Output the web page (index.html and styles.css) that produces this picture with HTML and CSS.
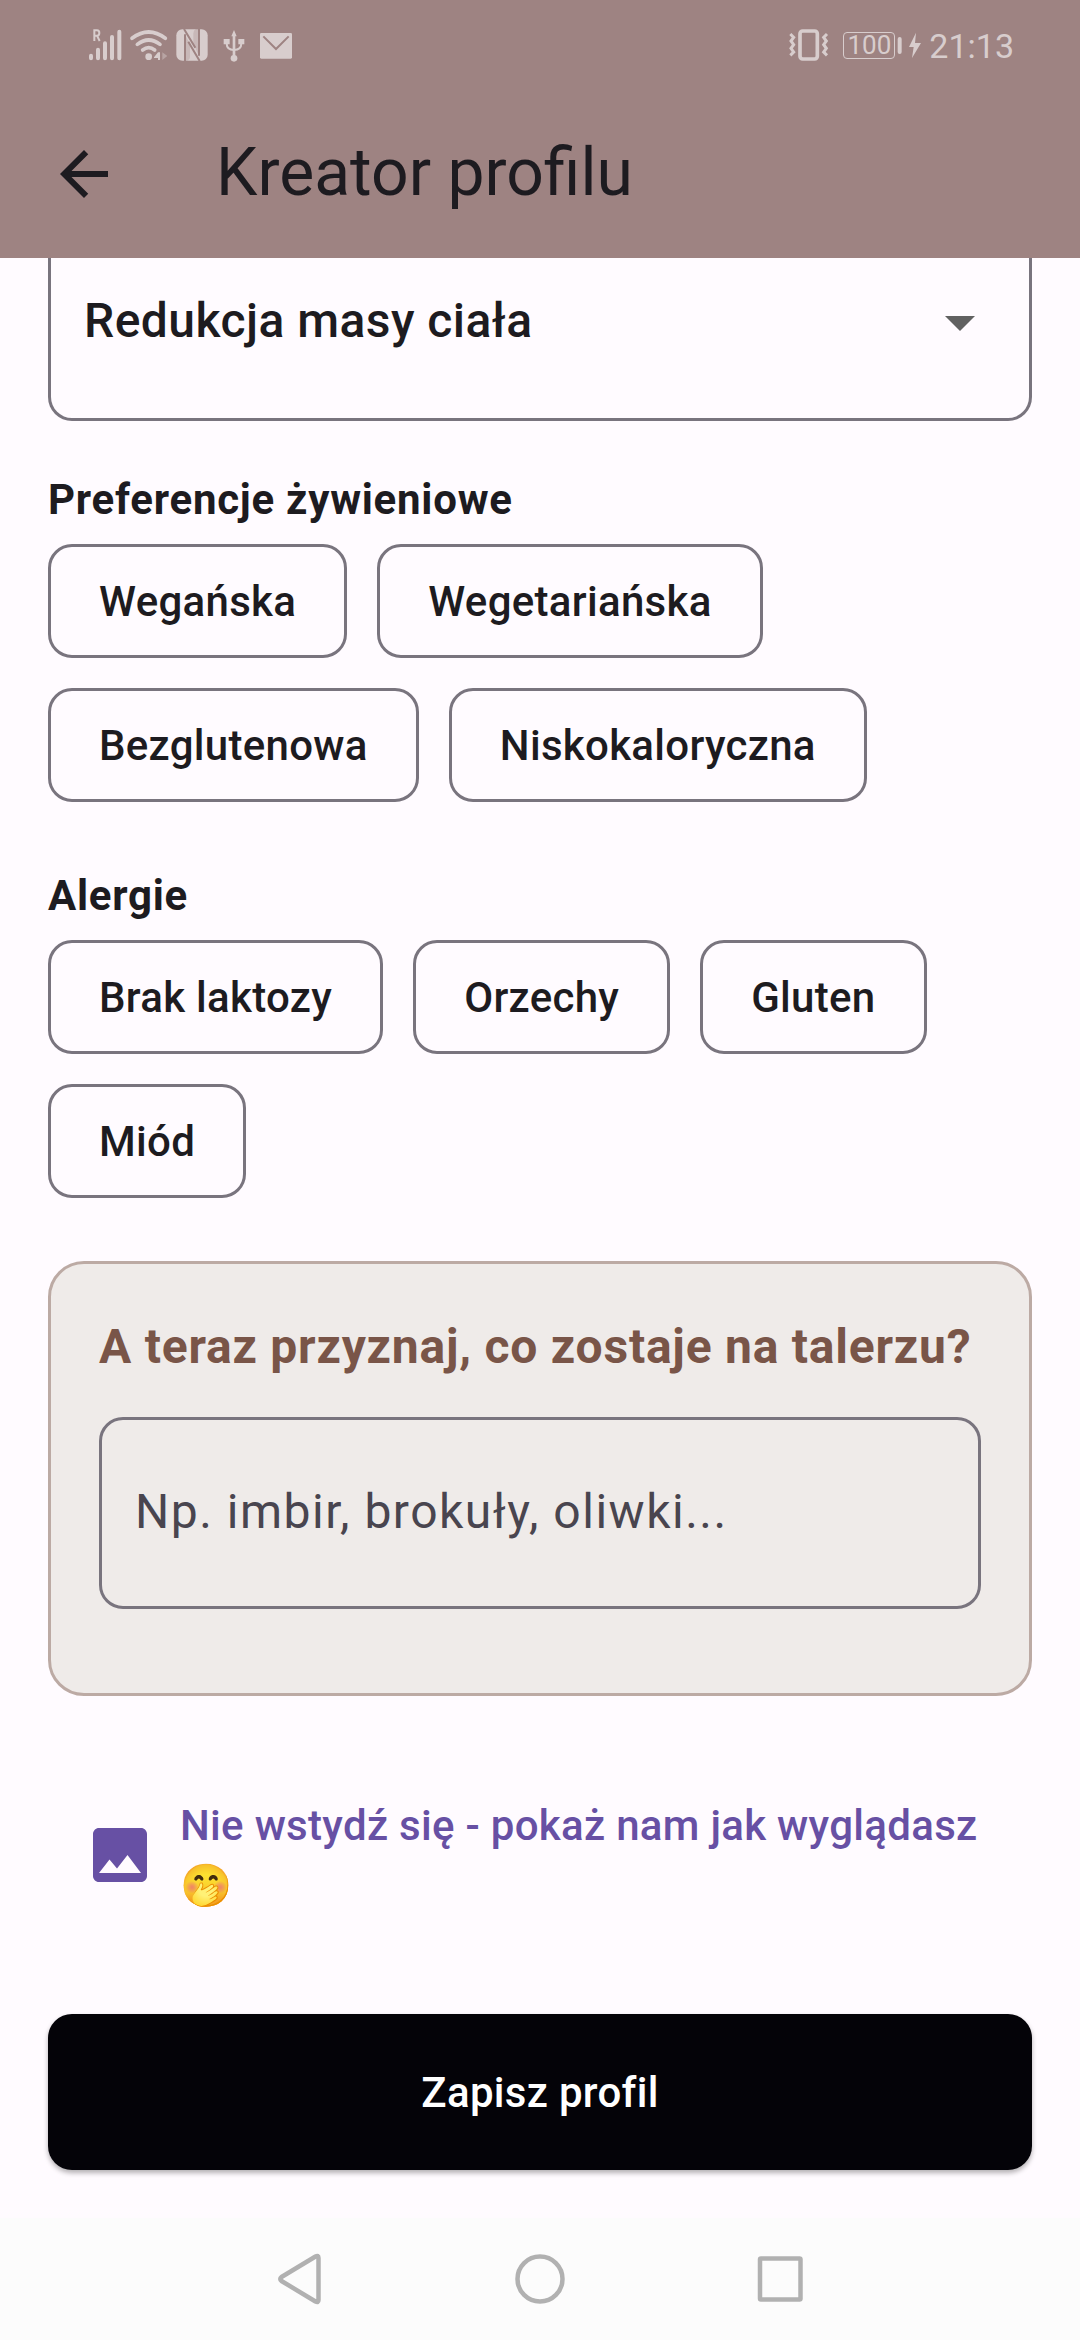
FILE: index.html
```html
<!DOCTYPE html>
<html lang="pl">
<head>
<meta charset="utf-8">
<title>Kreator profilu</title>
<link rel="stylesheet" href="styles.css">
</head>
<body>
<div class="screen">
  <header class="top">
    <div class="status">
      <svg class="status-left" width="240" height="60" viewBox="0 0 720 180" fill="#d8cdcd">
        <g stroke="#d8cdcd" stroke-width="12" stroke-linecap="round"><path d="M63 122v8M84 104v26M105 85v45M126 66v64M148 50v80"/></g>
        <path fill="none" stroke="#d8cdcd" stroke-width="6" d="M73 78V46h8q7 0 7 8t-7 8h-8M81 62l8 16"/>
        <g fill="none" stroke="#d8cdcd" stroke-width="11" stroke-linecap="round"><path d="M186 70q50-38 100 0M202 88q34-26 68 0M218 105q18-14 36 0"/></g>
        <circle cx="236" cy="125" r="10"/>
        <path d="M252 127l12-15h6v23h-6v-6h-12z"/>
        <path opacity=".45" d="M277 112l15 11-15 12z"/>
        <rect x="319" y="43" width="94" height="94" rx="18"/>
        <g fill="none" stroke="#9e8382" stroke-width="6" stroke-linejoin="round"><path d="M345 138V58M355 80l34 58M342 42l34 56M387 42v80"/></g>
        <path fill="#9e8382" d="M355 78l5 8v40q0 8-8 11h-7V60zM376 98l-6-8V56q0-10 8-14h10v84z" opacity=".28"/>
        <path d="M484 64l8-19 8 19zM488 60h8v65h-8zM461 72h18v16h-18zM505 72h18v16h-18z"/>
        <circle cx="492" cy="130" r="10"/>
        <path fill="none" stroke="#d8cdcd" stroke-width="6" d="M470 85q0 20 22 20t22-20"/>
        <rect x="570" y="54" width="96" height="77" rx="4"/>
        <path fill="none" stroke="#9e8382" stroke-width="6" d="M580 64l38 38 38-38"/>
      </svg>
      <div class="status-right">
        <svg width="40" height="32" viewBox="0 0 120 96" fill="none" stroke="#d8cdcd"><rect x="33" y="6" width="52" height="84" rx="8" stroke-width="11"/><path stroke-width="9" d="M4 15l10 10-8 11 8 11-8 11 8 11-10 10M114 15l-10 10 8 11-8 11 8 11-8 11 10 10"/></svg>
        <span class="battery">100</span>
        <svg class="bolt" width="24" height="26" viewBox="0 0 72 78" fill="#d8cdcd"><rect x="2" y="15" width="12" height="51" rx="6"/><path d="M57 2L36 45h14l-5 33 27-45H54z"/></svg>
        <span class="clock">21:13</span>
      </div>
    </div>
    <div class="bar">
      <svg width="72" height="72" viewBox="0 0 24 24" fill="#1d1b20"><path d="M20 11H7.830l5.590-5.590L12 4l-8 8 8 8 1.410-1.410L7.830 13H20v-2z"/></svg>
      <h1 class="title">Kreator profilu</h1>
    </div>
  </header>
  <main class="content">
    <div class="select">
      <span>Redukcja masy ciała</span>
      <svg class="caret" width="72" height="72" viewBox="0 0 24 24" fill="#616161"><path d="M7 10l5 5 5-5z"/></svg>
    </div>
    <h2 class="label label-diet">Preferencje żywieniowe</h2>
    <div class="chips">
      <span class="chip">Wegańska</span><span class="chip">Wegetariańska</span><span class="chip">Bezglutenowa</span><span class="chip">Niskokaloryczna</span>
    </div>
    <h2 class="label label-allergy">Alergie</h2>
    <div class="chips">
      <span class="chip">Brak laktozy</span><span class="chip">Orzechy</span><span class="chip">Gluten</span><span class="chip">Miód</span>
    </div>
    <section class="card">
      <h2 class="question">A teraz przyznaj, co zostaje na talerzu?</h2>
      <div class="input">Np. imbir, brokuły, oliwki...</div>
    </section>
    <div class="photo">
      <svg width="72" height="72" viewBox="0 0 24 24" fill="#6750a4"><path d="M21 19V5c0-1.100-.9-2-2-2H5c-1.100 0-2 .9-2 2v14c0 1.100.9 2 2 2h14c1.100 0 2-.9 2-2zM8.500 13.500l2.500 3.010L14.500 12l4.500 6H5l3.500-4.500z"/></svg>
      <span class="photo-text">Nie wstydź się - pokaż nam jak wyglądasz <span class="emoji">🤭</span></span>
    </div>
    <div class="save">Zapisz profil</div>
  </main>
  <nav class="nav">
    <svg width="560" height="122" viewBox="0 0 560 122" fill="none" stroke="#b1b1b1" stroke-width="4.500" stroke-linejoin="round"><path d="M58.500 40v42q0 3-3 1.500L21.500 63q-2.500-2 0-4L55.500 38.500q3-1.500 3 1.500z"/><circle cx="280" cy="61" r="22.500"/><rect x="500" y="40.500" width="40.500" height="41" rx="1"/></svg>
  </nav>
</div>
</body>
</html>
```
FILE: styles.css
```css
* { box-sizing: border-box; }
body { margin: 0; font-family: Roboto, "Liberation Sans", sans-serif; background: #fffbff; color: #1d1b20; }
.screen { width: 1080px; height: 2340px; display: flex; flex-direction: column; overflow: hidden; }
.top { height: 258px; flex: none; background: #9e8382; }
.status { height: 90px; display: flex; justify-content: space-between; padding: 15px 66px 0 70px; color: #d8cdcd; }
.status-right { display: flex; align-items: center; height: 60px; }
.battery { width: 52px; height: 27px; margin-left: 14px; border: 1.500px solid #d8cdcd; border-radius: 4px; font-size: 26px; line-height: 25px; text-align: center; }
.bolt { margin-left: 2px; }
.clock { font-size: 34px; line-height: 60px; margin-left: 8px; padding-top: 2px; }
.bar { height: 168px; display: flex; align-items: center; padding: 0 48px; gap: 96px; }
.title { margin: 0; font-size: 66px; font-weight: 400; line-height: 84px; padding-bottom: 2px; }
.content { height: 1960px; flex: none; padding: 0 48px; display: flex; flex-direction: column; }
.select { height: 163px; flex: none; border: 3px solid #79747e; border-top: 0; border-radius: 0 0 24px 24px; display: flex; justify-content: space-between; align-items: flex-start; padding: 27px 33px 0; font-size: 48px; font-weight: 500; line-height: 72px; letter-spacing: .45px; }
.caret { margin-top: 1px; }
.label { margin: 0; font-size: 42px; font-weight: 700; line-height: 60px; letter-spacing: .75px; }
.label-diet { margin-top: 49px; }
.label-allergy { margin-top: 64px; }
.chips { display: flex; flex-wrap: wrap; gap: 30px; margin-top: 14px; }
.chip { height: 114px; border: 3px solid #79747e; border-radius: 24px; padding: 0 48px; font-size: 42px; font-weight: 500; line-height: 110px; letter-spacing: .3px; }
.card { height: 435px; flex: none; margin-top: 63px; border: 3px solid #bcaaa4; border-radius: 36px; background: #efebe9; padding: 47px 48px 48px; }
.question { margin: 0; color: #795548; font-size: 48px; font-weight: 700; line-height: 72px; letter-spacing: .77px; white-space: nowrap; }
.input { height: 192px; margin-top: 34px; border: 3px solid #79747e; border-radius: 24px; padding: 0 33px; font-size: 48px; line-height: 184px; letter-spacing: 1.500px; color: #49454f; }
.photo { margin-top: 99px; height: 120px; flex: none; display: flex; align-items: center; padding: 0 36px; gap: 24px; color: #6750a4; font-size: 42px; font-weight: 500; line-height: 60px; letter-spacing: .3px; }
.photo-text { flex: 1; padding-top: 2px; }
.emoji { font-family: "Noto Color Emoji", sans-serif; }
.save { height: 156px; flex: none; margin-top: 99px; border-radius: 24px; background: #040308; color: #fff; font-size: 42px; font-weight: 500; line-height: 158px; text-align: center; letter-spacing: .3px; box-shadow: 0 3px 5px rgba(0,0,0,.3); }
.nav { height: 122px; flex: none; background: #fcfcfc; display: flex; justify-content: center; }
```
